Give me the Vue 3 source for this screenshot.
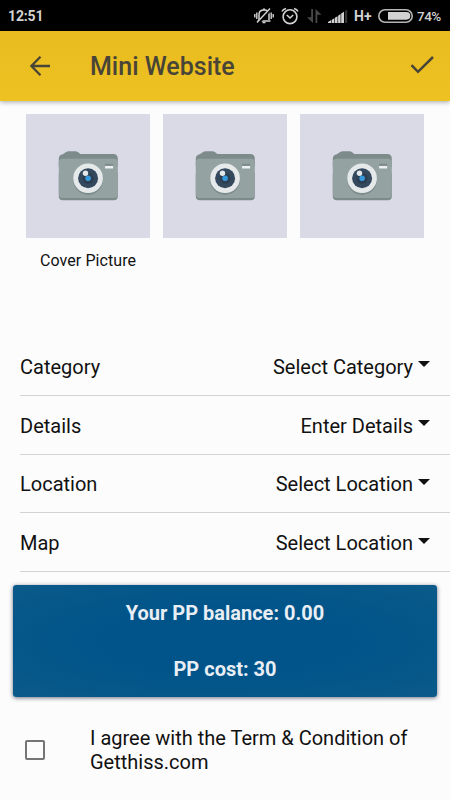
<template>
  <div class="screen">
    <div class="status">
      <span class="time">12:51</span>
      <div class="status-icons">
        <!-- Vibrate / muted bell -->
        <svg class="bell" width="20" height="18" viewBox="0 0 20 18" fill="none" stroke="#d2d2d2">
          <path d="M5 13V7.5Q5 3 10 3T15 7.5V13M3.5 14H16.5" stroke-width="1.5" />
          <path d="M8.5 15.5H11.5M9 2.2H11M2.8 5.5V12M17.2 5.5V12M.8 7V10.5M19.2 7V10.5" stroke-width="1.4" />
          <path d="M4.5 16L17 1.5" stroke="#000" stroke-width="2.8" />
          <path d="M3 15.5L16 1.5" stroke-width="1.4" />
        </svg>
        <svg class="alarm" width="18" height="18" viewBox="0 0 18 18" fill="none" stroke="#d2d2d2" stroke-width="1.6">
          <circle cx="9" cy="9.7" r="6.9" />
          <path d="M5.8 8L9 11L12.2 8M1 4.5Q2 2.2 5 1.4M17 4.5Q16 2.2 13 1.4" />
        </svg>
        <svg class="data" width="15" height="14" viewBox="0 0 15 14" fill="#484848">
          <path d="M4.2 0H6V14L0 8.3H4.2ZM8.5 14V0L14.5 5.7H10.3V14Z" />
        </svg>
        <svg class="signal" width="20" height="14" viewBox="0 0 20 14" fill="#d2d2d2">
          <path d="M0 14V13L3 11.3V14ZM3.6 14V10.9L6.3 9.3V14ZM6.9 14V8.8L9.5 7.2V14ZM10.1 14V6.7L12.6 5V14ZM13.2 14V4.6L16 2.7V14Z" />
          <path d="M17 14V2L19.2 .5V14Z" fill="#333" />
        </svg>
        <span class="network">H+</span>
        <svg class="battery" width="35" height="14" viewBox="0 0 35 14">
          <rect x=".8" y=".8" width="33.4" height="12.4" rx="6.2" fill="none" stroke="#b5b5b5" stroke-width="1.6" />
          <path d="M10 3H28.5Q32.3 3 32.3 6.8T28.5 10.7H10Z" fill="#d2d2d2" />
        </svg>
        <span class="percent">74%</span>
      </div>
    </div>

    <header class="toolbar">
      <svg class="back" width="20" height="20" viewBox="0 0 20 20" fill="none" stroke="#484538" stroke-width="2.3">
        <path d="M20 10H1.5M10.5 .8L1.4 10L10.5 19.2" />
      </svg>
      <h1 class="title">Mini Website</h1>
      <svg class="done" width="24" height="18" viewBox="0 0 24 18" fill="none" stroke="#484538" stroke-width="2.5">
        <path d="M1.5 9.2L8 15.8L23 1" />
      </svg>
    </header>

    <div class="pictures">
      <div v-for="n in 3" :key="n" class="picture">
        <svg width="60" height="50" viewBox="-0.8 0.2 60 50">
          <path d="M0 8Q0 4 4 3.5L7 1.5Q8.5 .5 10 .5H17Q18.5 .5 20 2L21.5 3.2H54.5Q59 3.2 59 8V16H0Z" fill="#7d8c8b" />
          <rect y="20" width="59" height="29.5" rx="4" fill="#7d8c8b" />
          <path d="M0 12Q0 8 4 8H55Q59 8 59 12V43Q59 47.3 55 47.3H4Q0 47.3 0 43Z" fill="#94a2a1" />
          <circle cx="29.3" cy="29.3" r="14.8" fill="#7d8c8b" />
          <circle cx="29.3" cy="27.5" r="14.8" fill="#e5e9ea" />
          <circle cx="29.3" cy="27.5" r="10" fill="#34495e" />
          <circle cx="29.3" cy="27.5" r="5.5" fill="#2c3e50" />
          <circle cx="29.3" cy="27.5" r="2.8" fill="#3498db" />
          <circle cx="26.7" cy="22.4" r="2.7" fill="#e5e9ea" />
          <path d="M46.3 13H54.3V15H46.3Z" fill="#7d8c8b" />
          <path d="M46.3 15.2H54.3V17.7H46.3Z" fill="#ecf0f1" />
        </svg>
      </div>
    </div>
    <p class="caption">Cover Picture</p>

    <div class="fields">
      <div v-for="field in fields" :key="field.label" class="field">
        <span>{{ field.label }}</span>
        <span class="value">{{ field.value }}</span>
        <i class="caret"></i>
      </div>
    </div>

    <div class="card">
      <p>Your PP balance: 0.00</p>
      <p>PP cost: 30</p>
    </div>

    <label class="agree">
      <span class="checkbox"></span>
      <span class="terms">I agree with the Term &amp; Condition of Getthiss.com</span>
    </label>
  </div>
</template>

<script setup>
const fields = [
  { label: 'Category', value: 'Select Category' },
  { label: 'Details', value: 'Enter Details' },
  { label: 'Location', value: 'Select Location' },
  { label: 'Map', value: 'Select Location' },
]
</script>

<style>
body {
  margin: 0;
  background: #fcfcfc;
}
</style>

<style scoped>
.screen {
  height: 800px;
  overflow: hidden;
  background: #fcfcfc;
  color: #111;
  font-family: Roboto, sans-serif;
}

p,
h1 {
  margin: 0;
}

.status {
  display: flex;
  align-items: center;
  justify-content: space-between;
  box-sizing: border-box;
  height: 31px;
  padding: 1px 8px 0;
  background: #000;
  color: #d2d2d2;
  font-size: 14px;
  font-weight: 500;
}

.time {
  font-weight: 700;
  letter-spacing: -0.15px;
}

.status-icons {
  display: flex;
  align-items: center;
}

.alarm {
  margin-left: 7px;
}

.data {
  margin-left: 8px;
}

.signal {
  margin-left: 6px;
}

.network {
  width: 18px;
  margin-left: 6px;
  font-weight: 700;
}

.battery {
  margin-left: 6px;
}

.percent {
  width: 25px;
  margin-left: 4px;
  font-size: 13.5px;
  letter-spacing: -0.5px;
}

.toolbar {
  display: flex;
  align-items: center;
  box-sizing: border-box;
  height: 70px;
  padding: 0 16px 0 30px;
  background: linear-gradient(#e8bb1e, #efc224);
  box-shadow: 0 1px 5px rgba(0, 0, 0, 0.35);
}

.title {
  flex: 1;
  margin-left: 40px;
  color: #484538;
  font-size: 25px;
  font-weight: 500;
}

.done {
  margin-bottom: 3px;
}

.pictures {
  display: flex;
  gap: 12.5px;
  padding: 13px 26px 0;
}

.picture {
  display: flex;
  flex: 1;
  align-items: center;
  justify-content: center;
  height: 123.5px;
  background: #dad9e6;
}

.caption {
  box-sizing: border-box;
  height: 99.5px;
  padding: 13px 0 0 40px;
  font-size: 16px;
  letter-spacing: 0.08px;
  line-height: 20px;
}

.field {
  display: flex;
  align-items: center;
  box-sizing: border-box;
  height: 58.8px;
  margin-left: 20px;
  padding: 2px 20px 0 0;
  border-bottom: 1px solid #d2d3d4;
  font-size: 20px;
}

.value {
  margin-left: auto;
}

.caret {
  margin: 0 0 5px 5px;
  border: 6px solid transparent;
  border-top-color: #111;
  border-bottom: 0;
}

.card {
  height: 112px;
  margin: 13px 13px 0;
  border-radius: 3px;
  background: radial-gradient(ellipse at center, #005489 40%, #0b5a8a);
  box-shadow: 0 1px 4px rgba(20, 20, 50, 0.6);
  color: #e9eef5;
  font-size: 20px;
  font-weight: 700;
  line-height: 56px;
  text-align: center;
}

.agree {
  display: flex;
  align-items: center;
  padding: 29px 30px 0 25px;
}

.checkbox {
  flex: none;
  box-sizing: border-box;
  width: 20px;
  height: 20px;
  margin-right: 45px;
  border: 2px solid #757575;
  border-radius: 2px;
}

.terms {
  font-size: 20px;
  line-height: 24px;
}
</style>
